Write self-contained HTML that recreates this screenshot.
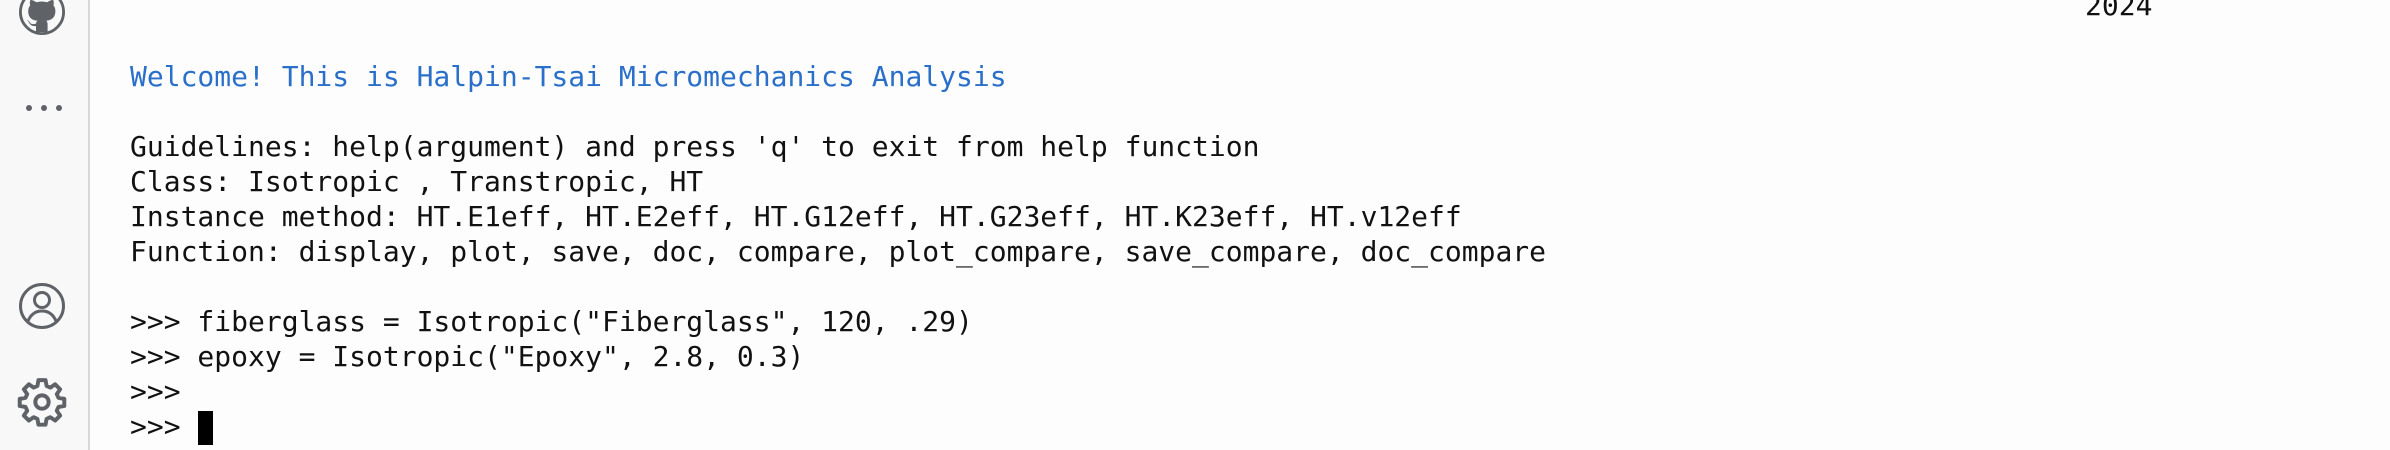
<!DOCTYPE html>
<html><head><style>
html,body{margin:0;padding:0;width:2390px;height:450px;overflow:hidden;background:#fdfdfd;}
#side{position:absolute;left:0;top:0;width:88px;height:450px;background:#f8f8f8;border-right:2px solid #d8d8dc;}
.t{position:absolute;left:130px;font-family:"DejaVu Sans Mono","Liberation Mono",monospace;font-size:28px;line-height:35px;color:#111;white-space:pre;}
svg{position:absolute;}
</style></head><body>
<div id="side">
<svg style="left:18px;top:-12px" width="48" height="48" viewBox="0 0 24 24"><circle cx="12" cy="12" r="10.8" fill="none" stroke="#5f6368" stroke-width="1.4"/><path fill="#5f6368" d="M9 22v-3c-2.5.4-3.3-1.3-3.5-1.8-.3-.6-.8-1-1.2-1.2.7 0 1.3.6 1.6 1.1.6 1 1.600 1.2 3.1.7.1-.7.4-1.1.7-1.4-2.4-.3-4.6-1.2-4.6-5 0-1.1.4-2 1-2.7-.1-.3-.4-1.3.1-2.7 0 0 .9-.3 3 1.1a10 10 0 0 1 5.4 0c2.1-1.4 3-1.1 3-1.1.5 1.4.2 2.4.1 2.7.6.7 1 1.6 1 2.7 0 3.8-2.3 4.7-4.6 5 .4.3.7.9.7 1.8V22z"/></svg>
<svg style="left:24px;top:101px" width="40" height="14"><circle cx="5" cy="7" r="3" fill="#5f6368"/><circle cx="20" cy="7" r="3" fill="#5f6368"/><circle cx="35" cy="7" r="3" fill="#5f6368"/></svg>
<svg style="left:18px;top:282px" width="48" height="48" viewBox="0 0 48 48"><circle cx="24" cy="24" r="21.5" fill="none" stroke="#5f6368" stroke-width="3"/><circle cx="24" cy="18" r="7.5" fill="none" stroke="#5f6368" stroke-width="3"/><path d="M10 39c3-7 8-10 14-10s11 3 14 10" fill="none" stroke="#5f6368" stroke-width="3"/></svg>
<svg style="left:17px;top:377px" width="50" height="50" viewBox="0 0 24 24"><path fill="none" stroke="#5f6368" stroke-width="1.9" stroke-linejoin="round" d="M10.3 1.5h3.4l.5 2.8 1.8.8 2.3-1.6 2.4 2.4-1.6 2.3.8 1.8 2.8.5v3.4l-2.8.5-.8 1.8 1.6 2.3-2.4 2.4-2.3-1.6-1.8.8-.5 2.8h-3.4l-.5-2.8-1.8-.8-2.3 1.6-2.4-2.4 1.6-2.3-.8-1.8-2.8-.5v-3.4l2.8-.5.8-1.8-1.6-2.3 2.4-2.4 2.3 1.6 1.8-.8z"/><circle cx="12" cy="12" r="3.2" fill="none" stroke="#5f6368" stroke-width="1.9"/></svg>
</div>
<div class="t" style="left:2085px;top:-12px">2024</div>
<div class="t" style="top:59px"><span style="color:#2a6fc9">Welcome! This is Halpin-Tsai Micromechanics Analysis</span>

Guidelines: help(argument) and press 'q' to exit from help function
Class: Isotropic , Transtropic, HT
Instance method: HT.E1eff, HT.E2eff, HT.G12eff, HT.G23eff, HT.K23eff, HT.v12eff
Function: display, plot, save, doc, compare, plot_compare, save_compare, doc_compare

&gt;&gt;&gt; fiberglass = Isotropic("Fiberglass", 120, .29)
&gt;&gt;&gt; epoxy = Isotropic("Epoxy", 2.8, 0.3)
&gt;&gt;&gt;
&gt;&gt;&gt; </div>
<div style="position:absolute;left:198px;top:411px;width:15px;height:34px;background:#000"></div>
</body></html>
